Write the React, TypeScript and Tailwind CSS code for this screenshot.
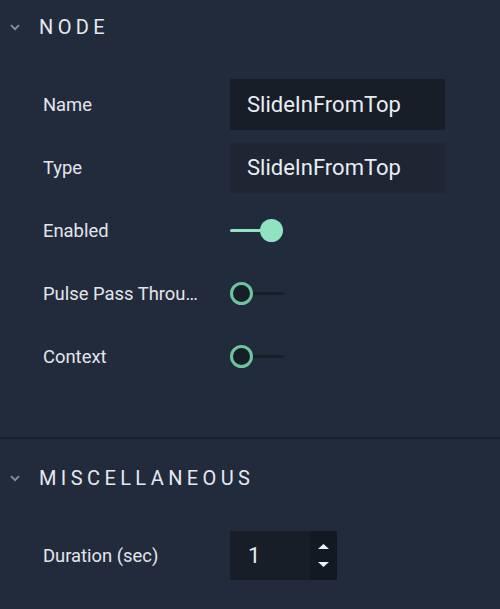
import React from "react";

function Chevron() {
  return (
    <svg width="10" height="7" viewBox="0 0 10 7" className="mr-[19px] ml-[10px]">
      <path d="M1 1.2 L5 5.2 L9 1.2" fill="none" stroke="#8a919c" strokeWidth="1.8" />
    </svg>
  );
}

function Header({ title }: { title: string }) {
  return (
    <div className="flex h-[54px] items-center">
      <Chevron />
      <span className="text-[20px] tracking-[0.22em] text-[#e4e9f0]">{title}</span>
    </div>
  );
}

function Row({ label, children }: { label: string; children: React.ReactNode }) {
  return (
    <div className="flex h-[63px] items-center pl-[43px]">
      <div className="w-[187px] text-[18.4px] text-[#e2e6ec] whitespace-nowrap overflow-hidden">{label}</div>
      <div className="flex items-center">{children}</div>
    </div>
  );
}

function ToggleOn() {
  return (
    <div className="flex items-center">
      <div className="h-[3px] w-[33px] rounded-full bg-[#8fe3c3]" />
      <div className="-ml-[3px] h-[23px] w-[23px] rounded-full bg-[#8fe3c3]" />
    </div>
  );
}

function ToggleOff() {
  return (
    <div className="flex items-center">
      <div className="h-[23px] w-[23px] rounded-full border-[3px] border-[#6cc59c] bg-[#181e28]" />
      <div className="h-[3px] w-[31px] rounded-r-full bg-[#181e28]" />
    </div>
  );
}

export default function App() {
  return (
    <div
      className="h-[609px] w-[500px] overflow-hidden bg-[#222b3b]"
      style={{ fontFamily: "Roboto, 'Noto Sans', sans-serif" }}
    >
      <div className="pb-[49px]">
        <Header title="NODE" />
        <div className="pt-[19px]">
          <Row label="Name">
            <div className="flex h-[51px] w-[215px] items-center bg-[#181e28] pl-[17px] text-[22px] text-[#e8edf3]">
              SlideInFromTop
            </div>
          </Row>
          <Row label="Type">
            <div className="flex h-[50px] w-[215px] items-center bg-[#1e2533] pl-[17px] text-[22px] text-[#e8edf3]">
              SlideInFromTop
            </div>
          </Row>
          <Row label="Enabled">
            <ToggleOn />
          </Row>
          <Row label="Pulse Pass Throu…">
            <ToggleOff />
          </Row>
          <Row label="Context">
            <ToggleOff />
          </Row>
        </div>
      </div>
      <div className="h-[2px] bg-[#1b222d]" />
      <div className="pt-[12px]">
        <Header title="MISCELLANEOUS" />
        <div className="pt-[19px]">
          <Row label="Duration (sec)">
            <div className="flex h-[49px] w-[107px] bg-[#181e28]">
              <div className="flex flex-1 items-center pl-[18px] text-[22px] text-[#e8edf3]">1</div>
              <div className="flex w-[27px] flex-col items-center justify-center gap-[13px] bg-[#131923]">
                <svg width="11" height="5" viewBox="0 0 11 5">
                  <path d="M0 5 L5.5 0 L11 5 Z" fill="#eef1f5" />
                </svg>
                <svg width="11" height="5" viewBox="0 0 11 5">
                  <path d="M0 0 L5.5 5 L11 0 Z" fill="#eef1f5" />
                </svg>
              </div>
            </div>
          </Row>
        </div>
      </div>
    </div>
  );
}
